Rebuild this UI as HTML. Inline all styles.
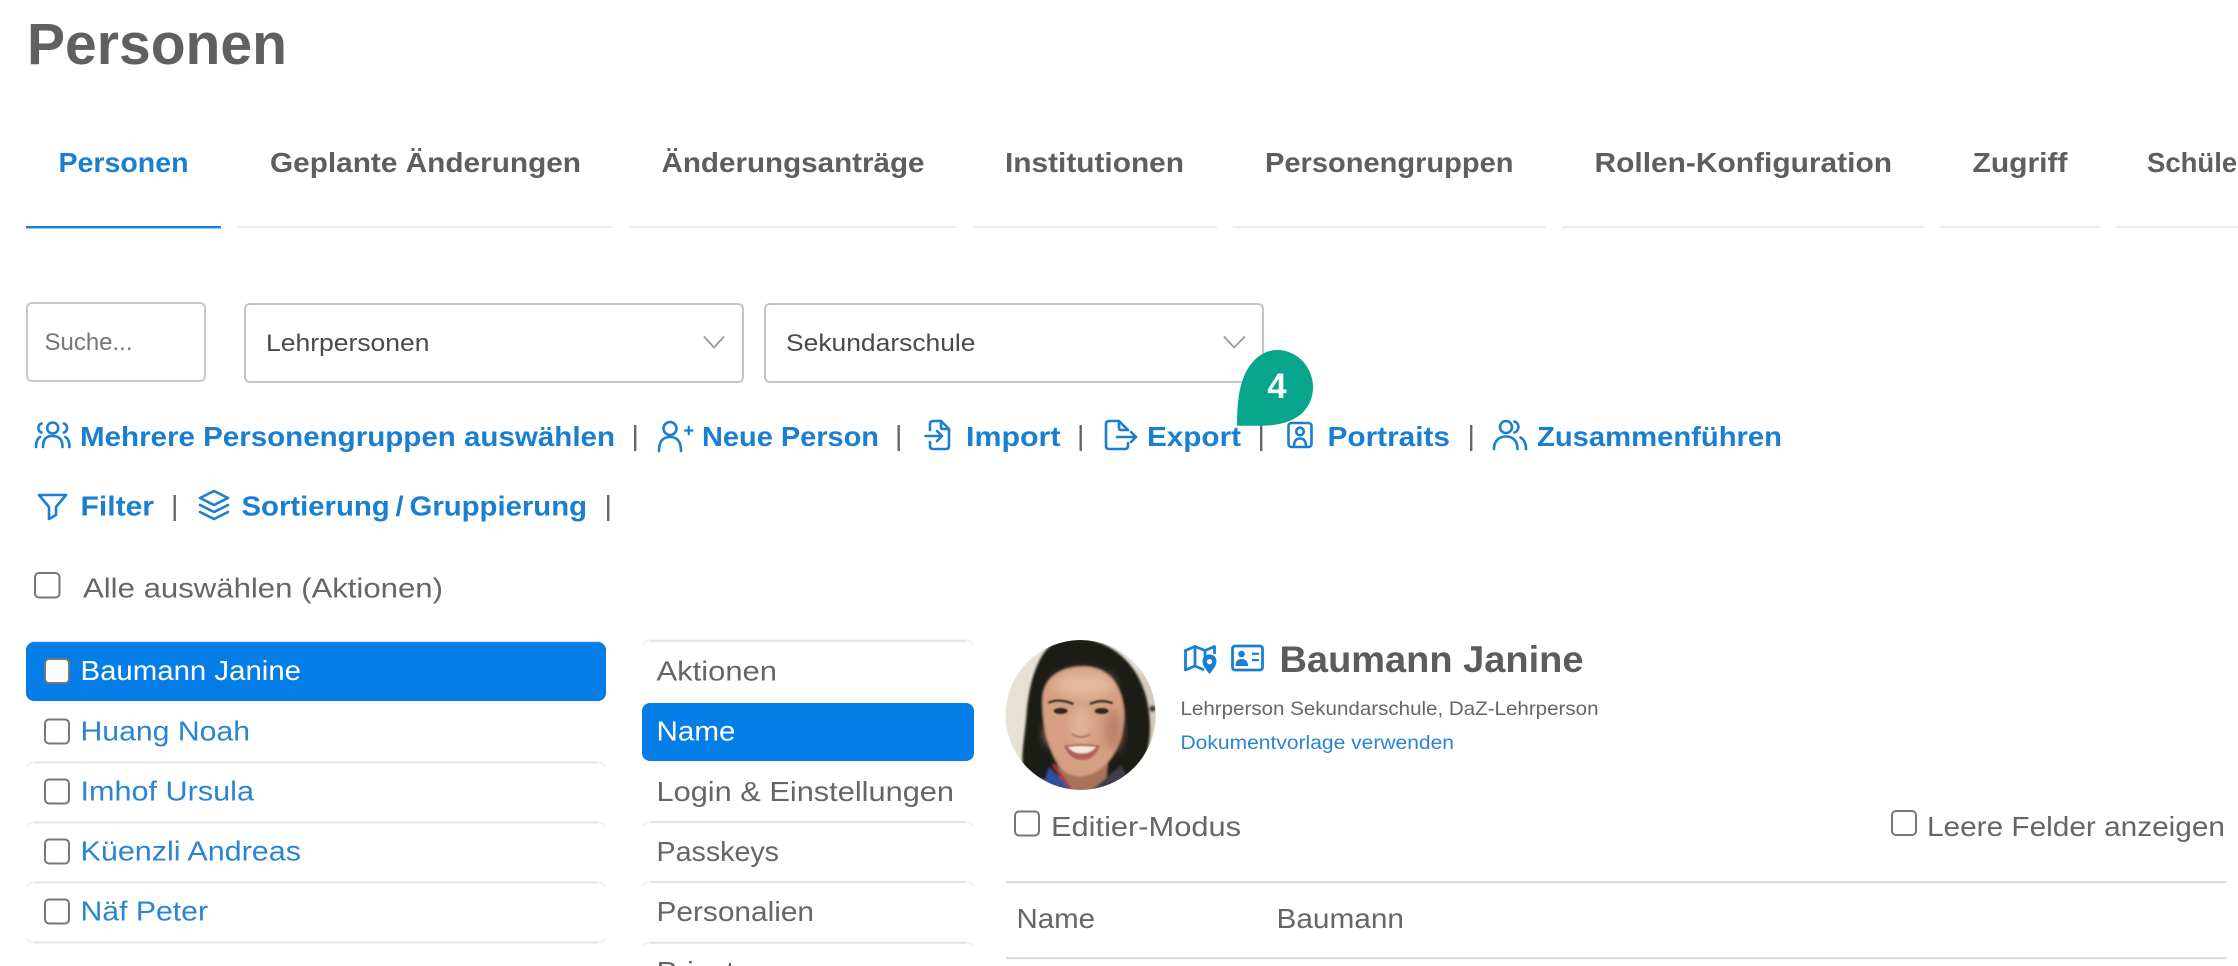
<!DOCTYPE html>
<html lang="de">
<head>
<meta charset="utf-8">
<title>Personen</title>
<style>
html,body{margin:0;padding:0;background:#fff;width:2238px;height:966px;overflow:hidden}
svg{display:block}
text{font-family:"Liberation Sans",sans-serif}
.t{font-size:58px;font-weight:700;fill:#606060}
.tab{font-size:27.5px;font-weight:700;fill:#5e5e5e}
.l{font-size:27.5px;font-weight:700;fill:#1a7fd0}
.r{font-size:27.5px;fill:#666}
.rb{font-size:27.5px;fill:#2a84d2}
.s{font-size:24.5px;fill:#4a4a4a}
.sm{font-size:19px;fill:#666}
.i{fill:none;stroke:#1a7fd0;stroke-width:2.6;stroke-linecap:round;stroke-linejoin:round}
.cb{fill:#fff;stroke:#777;stroke-width:2}
.sep{fill:#666}
.dv{fill:none;stroke:#e4e4e4;stroke-width:2}
.dc{fill:none;stroke:#f1f1f1;stroke-width:1.6}
</style>
</head>
<body>
<svg width="2238" height="966" viewBox="0 0 2238 966" xmlns="http://www.w3.org/2000/svg">
<defs>
<clipPath id="ph"><circle cx="272" cy="255" r="225"/></clipPath>
<filter id="bl" x="-10%" y="-10%" width="120%" height="120%"><feGaussianBlur stdDeviation="3.500"/></filter>
<filter id="bl2" x="-40%" y="-40%" width="180%" height="180%"><feGaussianBlur stdDeviation="14"/></filter>
<filter id="bl3" x="-40%" y="-40%" width="180%" height="180%"><feGaussianBlur stdDeviation="2"/></filter>
</defs>
<rect width="2238" height="966" fill="#fff"/>

<text class="t" x="27" y="64" textLength="260" lengthAdjust="spacingAndGlyphs">Personen</text>

<!-- Tabs -->
<text class="tab" x="58.500" y="172" textLength="130" lengthAdjust="spacingAndGlyphs" style="fill:#1a7fd0">Personen</text>
<text class="tab" x="270" y="172" textLength="311" lengthAdjust="spacingAndGlyphs">Geplante Änderungen</text>
<text class="tab" x="661.500" y="172" textLength="263" lengthAdjust="spacingAndGlyphs">Änderungsanträge</text>
<text class="tab" x="1005" y="172" textLength="179" lengthAdjust="spacingAndGlyphs">Institutionen</text>
<text class="tab" x="1265" y="172" textLength="248.500" lengthAdjust="spacingAndGlyphs">Personengruppen</text>
<text class="tab" x="1594.500" y="172" textLength="297.500" lengthAdjust="spacingAndGlyphs">Rollen-Konfiguration</text>
<text class="tab" x="1972.500" y="172" textLength="95" lengthAdjust="spacingAndGlyphs">Zugriff</text>
<text class="tab" x="2147" y="172">Schüler</text>
<rect x="26" y="226" width="195" height="2.400" fill="#1a7fd0"/>
<g fill="#ececec">
<rect x="237" y="226" width="376" height="2.200"/>
<rect x="629" y="226" width="328" height="2.200"/>
<rect x="973" y="226" width="244" height="2.200"/>
<rect x="1233" y="226" width="313" height="2.200"/>
<rect x="1562" y="226" width="362" height="2.200"/>
<rect x="1940" y="226" width="160" height="2.200"/>
<rect x="2116" y="226" width="122" height="2.200"/>
</g>

<!-- Search + selects -->
<rect x="27" y="303" width="178" height="78" rx="5" fill="#fff" stroke="#c9c9c9" stroke-width="2"/>
<text class="s" x="44.500" y="350" textLength="88" lengthAdjust="spacingAndGlyphs" style="fill:#777">Suche...</text>
<rect x="245" y="304" width="498" height="78" rx="5" fill="#fff" stroke="#c4c4c4" stroke-width="2"/>
<text class="s" x="266" y="351" textLength="163.500" lengthAdjust="spacingAndGlyphs">Lehrpersonen</text>
<path d="M704 336.500L714 347.500L724 336.500" fill="none" stroke="#999" stroke-width="1.800"/>
<rect x="765" y="304" width="498" height="78" rx="5" fill="#fff" stroke="#c4c4c4" stroke-width="2"/>
<text class="s" x="786" y="351" textLength="189.500" lengthAdjust="spacingAndGlyphs">Sekundarschule</text>
<path d="M1224 336.500L1234 347.500L1245 336.500" fill="none" stroke="#999" stroke-width="1.800"/>

<!-- Action row 1 -->
<g class="i">
<circle cx="52.700" cy="428" r="5.500"/>
<path d="M43 447C43 438 47 436 52.700 436C58 436 62.500 438 62.500 447"/>
<path d="M41.500 423.500A4.800 4.800 0 0 0 41.500 432.500"/>
<path d="M63.900 423.500A4.800 4.800 0 0 1 63.900 432.500"/>
<path d="M36 447C36 441 37.500 438.500 40 437"/>
<path d="M69.400 447C69.400 441 67.900 438.500 65.400 437"/>
</g>
<text class="l" x="80" y="446" textLength="535" lengthAdjust="spacingAndGlyphs">Mehrere Personengruppen auswählen</text>
<rect class="sep" x="634" y="425" width="2.400" height="26"/>
<g class="i">
<circle cx="670" cy="428.500" r="6.500"/>
<path d="M659 451C659 441 663 437 670 437C677 437 681 441 681 451"/>
<path d="M685 430.500H692.500M688.750 426.800V434.200" stroke-width="2.200"/>
</g>
<text class="l" x="702" y="446" textLength="177" lengthAdjust="spacingAndGlyphs">Neue Person</text>
<rect class="sep" x="897.500" y="425" width="2.400" height="26"/>
<g class="i">
<path d="M930 430V424Q930 421 933 421H941L949 429V446Q949 449 946 449H933Q930 449 930 446V442"/>
<path d="M941 421V427Q941 429 943 429H949"/>
<path d="M925.500 436H942M937 431L942 436L937 441"/>
</g>
<text class="l" x="966" y="446" textLength="94.500" lengthAdjust="spacingAndGlyphs">Import</text>
<rect class="sep" x="1079.500" y="425" width="2.400" height="26"/>
<g class="i">
<path d="M1128 430L1119 421H1109Q1106 421 1106 424V446Q1106 449 1109 449H1125Q1128 449 1128 446V443"/>
<path d="M1119 421V428Q1119 430 1121 430H1128"/>
<path d="M1117 437H1136M1131 432L1136 437L1131 442"/>
</g>
<text class="l" x="1147" y="446" textLength="94" lengthAdjust="spacingAndGlyphs">Export</text>
<rect class="sep" x="1260" y="425" width="2.400" height="26"/>
<g class="i">
<rect x="1288.500" y="423" width="23" height="24" rx="3"/>
<circle cx="1300" cy="431.500" r="3.800"/>
<path d="M1294 446.500C1294 440 1297 438.500 1300 438.500C1303 438.500 1306 440 1306 446.500"/>
</g>
<text class="l" x="1327.500" y="446" textLength="122.500" lengthAdjust="spacingAndGlyphs">Portraits</text>
<rect class="sep" x="1470" y="425" width="2.400" height="26"/>
<g class="i">
<circle cx="1506" cy="427" r="6"/>
<path d="M1494 449C1494 440 1500 436.500 1506 436.500C1512 436.500 1517.500 440 1517.500 449"/>
<path d="M1514.500 421.500A5.800 5.800 0 0 1 1514.500 432.500"/>
<path d="M1520.500 437.500C1524 439.500 1526 443 1526 449"/>
</g>
<text class="l" x="1537" y="446" textLength="245" lengthAdjust="spacingAndGlyphs">Zusammenführen</text>

<!-- Badge -->
<path d="M1237 425.700C1237 410 1238 392 1243 379C1249 362 1262 350 1277 350C1298 350 1313 368 1313 387C1313 410 1295 425.700 1262 425.700Z" fill="#06a58c"/>
<text x="1277" y="398" text-anchor="middle" font-size="35" font-weight="700" fill="#f4fbfa">4</text>

<!-- Action row 2 -->
<path class="i" d="M39 495H66L56 507V515L49 519V507Z"/>
<text class="l" x="80.500" y="515.500" textLength="73.500" lengthAdjust="spacingAndGlyphs">Filter</text>
<rect class="sep" x="173.500" y="495" width="2.400" height="26"/>
<g class="i">
<path d="M214 491L228 498L214 505L200 498Z"/>
<path d="M200 505L214 512L228 505"/>
<path d="M200 512L214 519L228 512"/>
</g>
<text class="l" x="241.500" y="515.500" textLength="345.500" lengthAdjust="spacingAndGlyphs">Sortierung&#8201;/&#8201;Gruppierung</text>
<rect class="sep" x="607" y="495" width="2.400" height="26"/>

<!-- Alle auswählen -->
<rect class="cb" x="35" y="573" width="24.500" height="24.500" rx="4"/>
<text class="r" x="83" y="597.500" textLength="360" lengthAdjust="spacingAndGlyphs">Alle auswählen (Aktionen)</text>

<!-- Person list -->
<rect x="26" y="642" width="580" height="59" rx="8" fill="#047de6"/>
<path d="M32 641.500H600" stroke="#cfe3f3" stroke-width="1.200"/>
<rect class="cb" x="45" y="659" width="24" height="24" rx="4"/>
<text class="r" x="80.500" y="680" textLength="220.500" lengthAdjust="spacingAndGlyphs" style="fill:#fff">Baumann Janine</text>

<path class="dc" d="M32 702.500H600"/>
<rect class="cb" x="45" y="719.500" width="24" height="24" rx="4"/>
<text class="rb" x="80.500" y="740.500" textLength="169.500" lengthAdjust="spacingAndGlyphs">Huang Noah</text>
<path class="dc" d="M27 767Q28 762.500 34 762.500M598 762.500Q604 762.500 605 767"/><path class="dv" d="M34 762.500H598"/>
<rect class="cb" x="45" y="779.500" width="24" height="24" rx="4"/>
<text class="rb" x="80.500" y="800.500" textLength="173.500" lengthAdjust="spacingAndGlyphs">Imhof Ursula</text>
<path class="dc" d="M27 827Q28 822.500 34 822.500M598 822.500Q604 822.500 605 827"/><path class="dv" d="M34 822.500H598"/>
<rect class="cb" x="45" y="839.500" width="24" height="24" rx="4"/>
<text class="rb" x="80.500" y="860.500" textLength="220.500" lengthAdjust="spacingAndGlyphs">Küenzli Andreas</text>
<path class="dc" d="M27 887Q28 882.500 34 882.500M598 882.500Q604 882.500 605 887"/><path class="dv" d="M34 882.500H598"/>
<rect class="cb" x="45" y="899.500" width="24" height="24" rx="4"/>
<text class="rb" x="80.500" y="920.500" textLength="127.500" lengthAdjust="spacingAndGlyphs">Näf Peter</text>
<path class="dc" d="M27 938Q28 942.500 34 942.500M598 942.500Q604 942.500 605 938"/><path class="dv" d="M34 942.500H598"/>

<!-- Menu -->
<path class="dc" d="M643 645Q644 640.800 650 640.800M966 640.800Q972 640.800 973 645"/><path class="dv" d="M650 640.800H966"/>
<text class="r" x="656.500" y="680.500" textLength="120.500" lengthAdjust="spacingAndGlyphs">Aktionen</text>
<rect x="642" y="703" width="332" height="58" rx="8" fill="#047de6"/>
<text class="r" x="656.500" y="740.500" textLength="79" lengthAdjust="spacingAndGlyphs" style="fill:#fff">Name</text>
<text class="r" x="656.500" y="801" textLength="297.500" lengthAdjust="spacingAndGlyphs">Login &amp; Einstellungen</text>
<path class="dc" d="M643 826Q644 822 650 822M966 822Q972 822 973 826"/><path class="dv" d="M650 822H966"/>
<text class="r" x="656.500" y="861" textLength="122.500" lengthAdjust="spacingAndGlyphs">Passkeys</text>
<path class="dc" d="M643 886Q644 882 650 882M966 882Q972 882 973 886"/><path class="dv" d="M650 882H966"/>
<text class="r" x="656.500" y="921" textLength="157.500" lengthAdjust="spacingAndGlyphs">Personalien</text>
<path class="dc" d="M643 947Q644 942.800 650 942.800M966 942.800Q972 942.800 973 947"/><path class="dv" d="M650 942.800H966"/>
<text class="r" x="656.500" y="981" textLength="78" lengthAdjust="spacingAndGlyphs">Privat</text>

<!-- Portrait -->
<g transform="translate(990 630) scale(.33333)">
<g clip-path="url(#ph)">
<rect x="40" y="20" width="470" height="470" fill="#e7e0d4"/>
<rect x="440" y="120" width="70" height="230" fill="#d2c9bb" filter="url(#bl2)"/>
<g filter="url(#bl)">
<path d="M235 22C150 30 118 150 110 250C104 320 92 385 100 410C125 440 150 450 180 455L430 450C465 400 490 340 476 240C460 120 380 22 235 22Z" fill="#1f1a19"/>
<circle cx="488" cy="236" r="9" fill="#3a3a3a"/>
<path d="M200 380L355 380L345 490L215 490Z" fill="#a8725a"/>
<path d="M150 490L178 412L255 490Z" fill="#2e4f9c"/>
<path d="M292 490L392 408L440 490Z" fill="#3c414c"/>
<path d="M190 402L240 478" stroke="#a43444" stroke-width="9" fill="none"/>
<path d="M158 200C163 140 218 108 285 110C350 112 395 160 402 240C405 300 385 370 340 410C310 438 270 445 235 432C190 410 153 300 158 200Z" fill="#d49f82"/>
</g>
<ellipse cx="280" cy="165" rx="90" ry="38" fill="#e4b89e" filter="url(#bl2)"/>
<ellipse cx="272" cy="285" rx="30" ry="55" fill="#e2b297" filter="url(#bl2)"/>
<ellipse cx="195" cy="310" rx="30" ry="35" fill="#dc9d84" filter="url(#bl2)"/>
<ellipse cx="370" cy="300" rx="24" ry="60" fill="#b98168" filter="url(#bl2)"/>
<g filter="url(#bl3)">
<path d="M175 218Q210 204 250 222" fill="none" stroke="#3f2d24" stroke-width="7"/>
<path d="M300 222Q335 206 368 220" fill="none" stroke="#3f2d24" stroke-width="7"/>
<ellipse cx="212" cy="243" rx="21" ry="9" fill="#33261f"/>
<ellipse cx="335" cy="243" rx="21" ry="9" fill="#33261f"/>
<path d="M245 312Q272 330 302 312" fill="none" stroke="#b07a60" stroke-width="6"/>
<path d="M222 347Q275 338 330 347Q312 392 275 390Q240 390 222 347Z" fill="#b5605a"/>
<path d="M234 351Q275 345 318 351Q304 370 275 370Q249 370 234 351Z" fill="#f0e6da"/>
</g>
</g>
</g>

<!-- Header icons -->
<g class="i" style="stroke-width:2.800">
<path d="M1185.500 650.500L1195 646.500L1205 650.500L1214.500 646.500V653"/>
<path d="M1185.500 650.500V670L1195 666L1203 669.500"/>
<path d="M1195 646.500V666M1205 650.500V657"/>
<rect x="1232.500" y="646" width="30" height="24" rx="2.500"/>
</g>
<path d="M1209.500 654.500C1205 654.500 1202.500 657.500 1202.500 661.500C1202.500 665.500 1206.500 670.500 1209.500 674C1212.500 670.500 1216.500 665.500 1216.500 661.500C1216.500 657.500 1214 654.500 1209.500 654.500ZM1209.500 659A2.600 2.600 0 1 1 1209.500 664.200A2.600 2.600 0 1 1 1209.500 659Z" fill="#1a7fd0" fill-rule="evenodd"/>
<g fill="#1a7fd0">
<circle cx="1241.500" cy="654" r="3.300"/>
<path d="M1235.500 666C1235.500 660.500 1238 659 1241.500 659C1245 659 1248 660.500 1248 666Z"/>
<rect x="1252" y="652.700" width="7" height="2.200"/>
<rect x="1252" y="659" width="7" height="2.200"/>
</g>

<text x="1279.500" y="672" font-size="37.500" font-weight="700" fill="#5c5c5c" textLength="304" lengthAdjust="spacingAndGlyphs">Baumann Janine</text>
<text class="sm" x="1180.500" y="715" textLength="418" lengthAdjust="spacingAndGlyphs">Lehrperson Sekundarschule, DaZ-Lehrperson</text>
<text class="sm" x="1180.500" y="749" textLength="273.500" lengthAdjust="spacingAndGlyphs" style="fill:#2a84d2">Dokumentvorlage verwenden</text>

<rect class="cb" x="1015" y="811.500" width="24" height="24" rx="4"/>
<text class="r" x="1051" y="836" textLength="190" lengthAdjust="spacingAndGlyphs">Editier-Modus</text>
<rect class="cb" x="1892" y="811" width="24" height="24" rx="4"/>
<text class="r" x="1927" y="836" textLength="298" lengthAdjust="spacingAndGlyphs">Leere Felder anzeigen</text>

<rect x="1006" y="881" width="1221" height="2.200" fill="#dcdcdc"/>
<text class="r" x="1016.500" y="928" textLength="78.500" lengthAdjust="spacingAndGlyphs">Name</text>
<text class="r" x="1276.500" y="928" textLength="127.500" lengthAdjust="spacingAndGlyphs">Baumann</text>
<rect x="1006" y="957" width="1221" height="2.200" fill="#dcdcdc"/>
</svg>
</body>
</html>
